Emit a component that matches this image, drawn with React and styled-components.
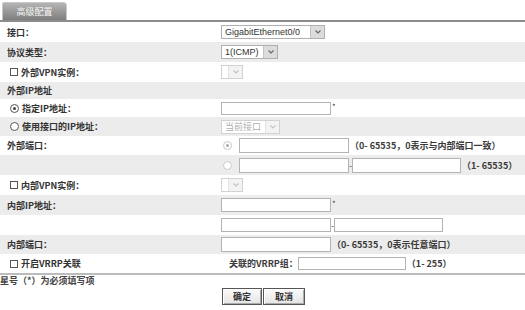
import React from "react";
import styled, { createGlobalStyle } from "styled-components";

const GlobalStyle = createGlobalStyle`
  html, body {
    margin: 0;
    padding: 0;
    background: #fff;
  }
  body {
    font-family: "Noto Sans CJK SC", "Liberation Sans", sans-serif;
    font-size: 9px;
    color: #2a2a2a;
  }
`;

const Page = styled.div`
  width: 525px;
  height: 310px;
  overflow: hidden;
  padding-top: 2px;
  box-sizing: border-box;
`;

const TabBar = styled.div`
  display: flex;
  height: 18px;
  padding-left: 2px;
  border-bottom: 2px solid #8c8c8c;
`;

const Tab = styled.div`
  width: 65px;
  display: flex;
  align-items: center;
  justify-content: center;
  color: #f4f4f4;
  background: linear-gradient(#b4b4b4, #7e7e7e);
  border: 1px solid #c8c8c8;
  border-bottom: none;
  border-radius: 2px 4px 0 0;
  box-sizing: border-box;
`;

const Table = styled.div`
  border-bottom: 2px solid #bcbcbc;
`;

const Row = styled.div`
  display: grid;
  grid-template-columns: 221px 1fr;
  align-items: center;
  height: ${(p) => p.$h}px;
  background: ${(p) => (p.$shade ? "#ececec" : "#fff")};
`;

const Label = styled.div`
  display: flex;
  align-items: center;
  gap: 3px;
  padding-left: ${(p) => (p.$boxed ? 10 : 7)}px;
  font-weight: bold;
  color: #333;
  white-space: nowrap;
`;

const Cell = styled.div`
  display: flex;
  align-items: center;
  white-space: nowrap;
  padding-left: ${(p) => p.$pad || 0}px;
`;

const Box = styled.span`
  width: 8px;
  height: 8px;
  border: 1px solid #555;
  box-sizing: border-box;
  background: #fff;
`;

const Radio = styled.span`
  width: 9px;
  height: 9px;
  border-radius: 50%;
  border: 1px solid ${(p) => (p.$dim ? "#c8c8c8" : "#555")};
  box-sizing: border-box;
  display: flex;
  align-items: center;
  justify-content: center;
  background: #fff;
  margin-left: ${(p) => p.$ml || 0}px;
  margin-right: ${(p) => p.$mr || 0}px;
  &::after {
    content: "";
    display: ${(p) => (p.$on ? "block" : "none")};
    width: 3px;
    height: 3px;
    border-radius: 50%;
    background: ${(p) => (p.$dim ? "#aaa" : "#444")};
  }
`;

const Field = styled.span`
  display: block;
  width: ${(p) => p.$w || 110}px;
  height: ${(p) => p.$hgt || 14}px;
  border: 1px solid #b4b4b4;
  box-sizing: border-box;
  background: #fff;
`;

const Select = styled.span`
  display: flex;
  align-items: stretch;
  width: ${(p) => p.$w}px;
  height: 14px;
  border: 1px solid ${(p) => (p.$off ? "#d2d2d2" : "#b0b0b0")};
  box-sizing: border-box;
  background: #fff;
  font-family: "Liberation Sans", "Noto Sans CJK SC", sans-serif;
  font-size: 9px;
  color: ${(p) => (p.$off ? "#b0b0b0" : "#333")};
`;

const SelectText = styled.span`
  flex: 1;
  display: flex;
  align-items: center;
  padding-left: 3px;
  overflow: hidden;
`;

const Arrow = styled.span`
  width: 13px;
  display: flex;
  align-items: center;
  justify-content: center;
  background: ${(p) => (p.$off ? "#f3f3f3" : "#dcdcdc")};
  border-left: 1px solid ${(p) => (p.$off ? "#e2e2e2" : "#c4c4c4")};
`;

const Dash = styled.span`
  width: 3px;
  text-align: center;
  color: #555;
`;

const Star = styled.span`
  margin-left: 1px;
  margin-top: -4px;
  font-size: 8px;
  color: #444;
`;

const Hint = styled.span`
  margin-left: ${(p) => p.$ml ?? 1}px;
  font-weight: bold;
  color: #3a3a3a;
`;

const Footer = styled.div`
  height: 11px;
  line-height: 11px;
  font-weight: bold;
  color: #444;
`;

const Buttons = styled.div`
  display: flex;
  gap: 1px;
  padding: 2px 0 0 222px;
`;

const Button = styled.span`
  width: ${(p) => p.$w}px;
  height: 17px;
  display: flex;
  align-items: center;
  justify-content: center;
  border: 1px solid #555;
  box-shadow: inset 1px 1px 0 #fff, inset -1px -1px 0 #aaa;
  background: linear-gradient(#fafafa, #e4e4e4);
  box-sizing: border-box;
  font-weight: bold;
  color: #333;
`;

function Chevron({ off }) {
  return (
    <svg width="6" height="4" viewBox="0 0 6 4">
      <polyline
        points="0.5,0.5 3,3 5.5,0.5"
        fill="none"
        stroke={off ? "#c4c4c4" : "#666"}
        strokeWidth="1.1"
      />
    </svg>
  );
}

function Dropdown({ w, text, off }) {
  return (
    <Select $w={w} $off={off}>
      <SelectText>{text}</SelectText>
      <Arrow $off={off}>
        <Chevron off={off} />
      </Arrow>
    </Select>
  );
}

export default function App() {
  return (
    <Page>
      <GlobalStyle />
      <TabBar>
        <Tab>高级配置</Tab>
      </TabBar>
      <Table>
        <Row $h={20}>
          <Label>接口：</Label>
          <Cell>
            <Dropdown w={104} text="GigabitEthernet0/0" />
          </Cell>
        </Row>
        <Row $h={20} $shade>
          <Label>协议类型：</Label>
          <Cell>
            <Dropdown w={57} text="1(ICMP)" />
          </Cell>
        </Row>
        <Row $h={20}>
          <Label $boxed>
            <Box />
            外部VPN实例：
          </Label>
          <Cell>
            <Dropdown w={22} off />
          </Cell>
        </Row>
        <Row $h={17} $shade>
          <Label>外部IP地址</Label>
          <Cell />
        </Row>
        <Row $h={18}>
          <Label $boxed>
            <Radio $on />
            指定IP地址：
          </Label>
          <Cell>
            <Field $hgt={13} />
            <Star>*</Star>
          </Cell>
        </Row>
        <Row $h={19} $shade>
          <Label $boxed>
            <Radio />
            使用接口的IP地址：
          </Label>
          <Cell>
            <Dropdown w={59} text="当前接口" off />
          </Cell>
        </Row>
        <Row $h={19}>
          <Label>外部端口：</Label>
          <Cell>
            <Radio $on $dim $ml={2} $mr={7} />
            <Field $hgt={15} />
            <Hint>（0- 65535，0表示与内部端口一致）</Hint>
          </Cell>
        </Row>
        <Row $h={20} $shade>
          <Label />
          <Cell>
            <Radio $dim $ml={2} $mr={7} />
            <Field $hgt={15} />
            <Dash>-</Dash>
            <Field $hgt={15} $w={109} />
            <Hint>（1- 65535）</Hint>
          </Cell>
        </Row>
        <Row $h={20}>
          <Label $boxed>
            <Box />
            内部VPN实例：
          </Label>
          <Cell>
            <Dropdown w={22} off />
          </Cell>
        </Row>
        <Row $h={20} $shade>
          <Label>内部IP地址：</Label>
          <Cell>
            <Field />
            <Star>*</Star>
          </Cell>
        </Row>
        <Row $h={20}>
          <Label />
          <Cell>
            <Field />
            <Dash>-</Dash>
            <Field $w={109} />
          </Cell>
        </Row>
        <Row $h={19} $shade>
          <Label>内部端口：</Label>
          <Cell>
            <Field $hgt={15} />
            <Hint>（0- 65535，0表示任意端口）</Hint>
          </Cell>
        </Row>
        <Row $h={19}>
          <Label $boxed>
            <Box />
            开启VRRP关联
          </Label>
          <Cell $pad={8}>
            <Hint $ml={0}>关联的VRRP组：</Hint>
            <Field $w={108} $hgt={13} />
            <Hint>（1- 255）</Hint>
          </Cell>
        </Row>
      </Table>
      <Footer>星号（*）为必须填写项</Footer>
      <Buttons>
        <Button $w={40}>确定</Button>
        <Button $w={42}>取消</Button>
      </Buttons>
    </Page>
  );
}
